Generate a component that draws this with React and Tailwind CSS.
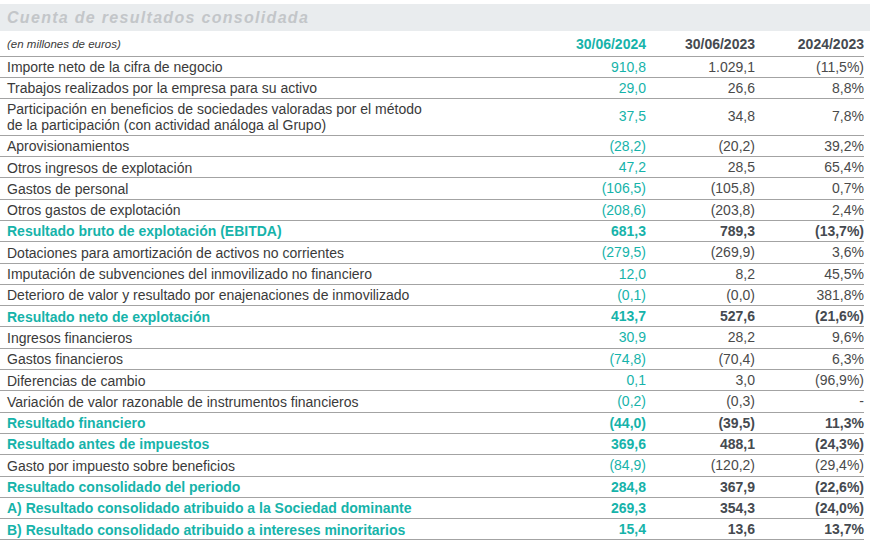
import React from "react";

const T = "text-[#16b3aa]";

const rows = [
  { l: "Importe neto de la cifra de negocio", a: "910,8", b: "1.029,1", c: "(11,5%)" },
  { l: "Trabajos realizados por la empresa para su activo", a: "29,0", b: "26,6", c: "8,8%" },
  { l: ["Participación en beneficios de sociedades valoradas por el método", "de la participación (con actividad análoga al Grupo)"], a: "37,5", b: "34,8", c: "7,8%", tall: true },
  { l: "Aprovisionamientos", a: "(28,2)", b: "(20,2)", c: "39,2%" },
  { l: "Otros ingresos de explotación", a: "47,2", b: "28,5", c: "65,4%" },
  { l: "Gastos de personal", a: "(106,5)", b: "(105,8)", c: "0,7%" },
  { l: "Otros gastos de explotación", a: "(208,6)", b: "(203,8)", c: "2,4%" },
  { l: "Resultado bruto de explotación (EBITDA)", a: "681,3", b: "789,3", c: "(13,7%)", bold: true },
  { l: "Dotaciones para amortización de activos no corrientes", a: "(279,5)", b: "(269,9)", c: "3,6%" },
  { l: "Imputación de subvenciones del inmovilizado no financiero", a: "12,0", b: "8,2", c: "45,5%" },
  { l: "Deterioro de valor y resultado por enajenaciones de inmovilizado", a: "(0,1)", b: "(0,0)", c: "381,8%" },
  { l: "Resultado neto de explotación", a: "413,7", b: "527,6", c: "(21,6%)", bold: true },
  { l: "Ingresos financieros", a: "30,9", b: "28,2", c: "9,6%" },
  { l: "Gastos financieros", a: "(74,8)", b: "(70,4)", c: "6,3%" },
  { l: "Diferencias de cambio", a: "0,1", b: "3,0", c: "(96,9%)" },
  { l: "Variación de valor razonable de instrumentos financieros", a: "(0,2)", b: "(0,3)", c: "-" },
  { l: "Resultado financiero", a: "(44,0)", b: "(39,5)", c: "11,3%", bold: true },
  { l: "Resultado antes de impuestos", a: "369,6", b: "488,1", c: "(24,3%)", bold: true },
  { l: "Gasto por impuesto sobre beneficios", a: "(84,9)", b: "(120,2)", c: "(29,4%)" },
  { l: "Resultado consolidado del periodo", a: "284,8", b: "367,9", c: "(22,6%)", bold: true },
  { l: "A) Resultado consolidado atribuido a la Sociedad dominante", a: "269,3", b: "354,3", c: "(24,0%)", bold: true },
  { l: "B) Resultado consolidado atribuido a intereses minoritarios", a: "15,4", b: "13,6", c: "13,7%", bold: true },
];

function Row({ r }) {
  const h = r.tall ? "h-[36.7px]" : "h-[21.3px]";
  const lab = r.bold ? `${T} font-bold` : "text-[#3a3a3a]";
  const va = r.bold ? `${T} font-bold` : T;
  const vb = r.bold ? "text-[#454a50] font-bold" : "text-[#4a4a4a]";
  return (
    <div className={`grid grid-cols-[1fr_110px_109px_109px] items-center border-b border-[#a3a3a3] ${h}`}>
      <div className={`pl-[7px] leading-[16px] ${lab}`}>
        {Array.isArray(r.l) ? r.l.map((x, i) => <div key={i}>{x}</div>) : r.l}
      </div>
      <div className={`text-right ${va}`}>{r.a}</div>
      <div className={`text-right ${vb}`}>{r.b}</div>
      <div className={`text-right ${vb}`}>{r.c}</div>
    </div>
  );
}

export default function App() {
  return (
    <div className="w-[874px] h-[545px] bg-white font-['Liberation_Sans',Arial,sans-serif] text-[14px]">
      <div className="w-[870px]">
        <div className="mt-[4px] h-[27px] bg-[#e9ecee] flex items-center pl-[7px]">
          <span className="italic font-bold text-[16px] tracking-[1.3px] text-[#c3c6c9]">Cuenta de resultados consolidada</span>
        </div>
        <div className="pr-[6px]">
          <div className="grid grid-cols-[1fr_110px_109px_109px] items-center border-b border-[#a3a3a3] h-[25.5px] pt-[2px]">
            <div className="pl-[7px] italic text-[11.5px] text-[#3a3a3a]">(en millones de euros)</div>
            <div className={`text-right font-bold ${T}`}>30/06/2024</div>
            <div className="text-right font-bold text-[#454a50]">30/06/2023</div>
            <div className="text-right font-bold text-[#454a50]">2024/2023</div>
          </div>
          {rows.map((r, i) => (
            <Row key={i} r={r} />
          ))}
        </div>
      </div>
    </div>
  );
}
